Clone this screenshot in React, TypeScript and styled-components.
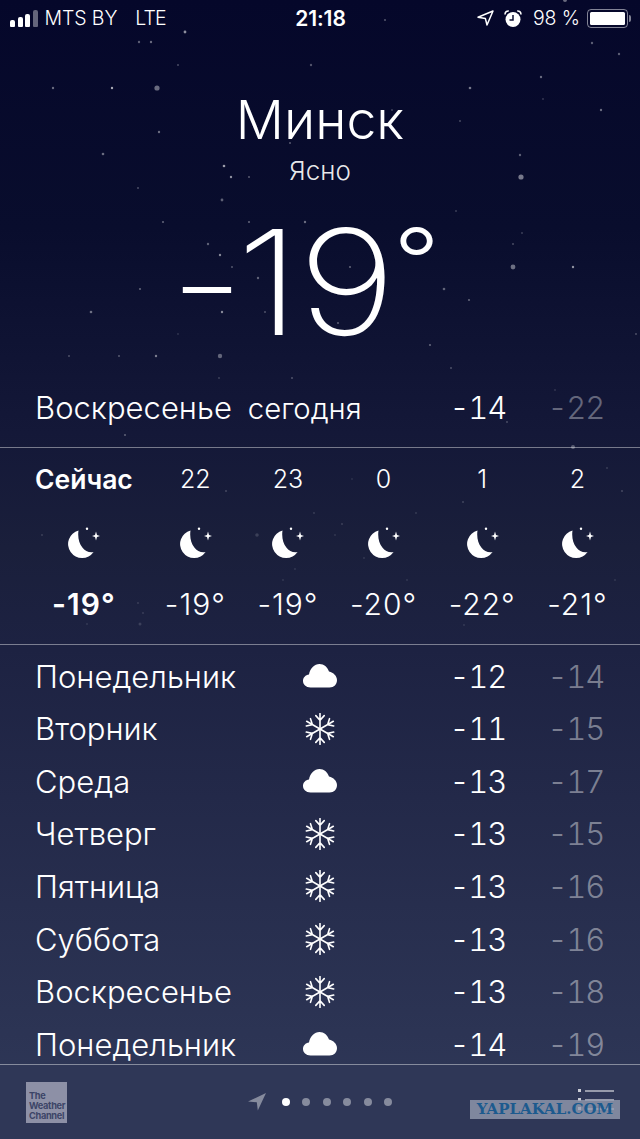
import styled, { createGlobalStyle } from "styled-components";

const GlobalStyle = createGlobalStyle`
  html, body {
    margin: 0;
    padding: 0;
    background: #05072a;
  }
  * {
    box-sizing: border-box;
  }
`;

const Screen = styled.div`
  position: relative;
  width: 640px;
  height: 1139px;
  overflow: hidden;
  color: #fff;
  font-family: Inter, "Noto Sans", sans-serif;
  background: linear-gradient(180deg, #05072a 0%, #090d2d 20%, #141838 38%, #1a1f3b 48%, #1d2242 57%, #232949 70%, #303959 100%);
`;

const Stars = styled.svg`
  position: absolute;
  inset: 0;
  pointer-events: none;
`;

const Content = styled.div`
  position: relative;
  display: flex;
  flex-direction: column;
  height: 100%;
`;

const StatusBar = styled.div`
  display: grid;
  grid-template-columns: 1fr auto 1fr;
  align-items: center;
  height: 36px;
  padding: 0 9px 0 10px;
  font-size: 19.5px;
  font-weight: 350;
  letter-spacing: -0.1px;
  color: #fff;
`;

const StatusLeft = styled.div`
  display: flex;
  align-items: center;
`;

const StatusRight = styled.div`
  display: flex;
  align-items: center;
  justify-content: flex-end;
`;

const Signal = styled.div`
  display: flex;
  align-items: flex-end;
  gap: 2.5px;
  height: 17px;
  margin-right: 7px;
`;

const SignalBar = styled.span<{ $h: number; $off?: boolean }>`
  width: 5px;
  height: ${(p) => p.$h}px;
  border-radius: 2px 2px 1px 1px;
  background: ${(p) => (p.$off ? "rgba(255,255,255,0.38)" : "#fff")};
`;

const Network = styled.span`
  margin-left: 18px;
  letter-spacing: -0.9px;
`;

const Clock = styled.div`
  font-weight: 600;
  font-size: 21px;
`;

const Percent = styled.span`
  margin: 0 7px 0 11px;
`;

const Battery = styled.div`
  display: flex;
  align-items: center;
`;

const BatteryBody = styled.div`
  width: 41px;
  height: 19px;
  padding: 2px;
  border: 1.5px solid rgba(255, 255, 255, 0.5);
  border-radius: 4px;
  &::after {
    content: "";
    display: block;
    height: 100%;
    background: #fff;
    border-radius: 1.5px;
  }
`;

const BatteryNub = styled.div`
  width: 2px;
  height: 7px;
  margin-left: 1px;
  border-radius: 0 2px 2px 0;
  background: rgba(255, 255, 255, 0.5);
`;

const Hero = styled.div`
  display: flex;
  flex-direction: column;
  align-items: center;
`;

const City = styled.h1`
  margin: 46px 0 0;
  font-size: 53.5px;
  font-weight: 350;
  line-height: 76px;
`;

const Condition = styled.div`
  margin-top: -2px;
  font-size: 26px;
  font-weight: 350;
  line-height: 30px;
  color: rgba(255, 255, 255, 0.92);
`;

const BigTemp = styled.div`
  margin: 11px 33px 11px 0;
  font-size: 146px;
  font-weight: 200;
  line-height: 170px;
  letter-spacing: -2px;
  white-space: nowrap;
  transform: scaleX(1.15);
`;

const Minus = styled.span`
  margin-right: -5px;
`;

const Degree = styled.span`
  margin-left: 0;
  font-size: 88px;
  font-weight: 300;
  line-height: 0;
  vertical-align: 43px;
`;

const Row = styled.div<{ $h?: number; $gap?: number }>`
  display: grid;
  grid-template-columns: 268px 34px 169px 98px;
  align-items: center;
  height: ${(p) => p.$h ?? 52.55}px;
  margin-bottom: ${(p) => p.$gap ?? 0}px;
  padding-left: 35px;
  font-size: 31px;
  font-weight: 350;
  flex-shrink: 0;
`;

const DayName = styled.div`
  white-space: nowrap;
`;

const Today = styled.span`
  margin-left: 16px;
  font-size: 29.3px;
`;

const Max = styled.div`
  text-align: right;
  font-feature-settings: "tnum";
  letter-spacing: -1.2px;
`;

const Min = styled(Max)<{ $dim?: number }>`
  color: rgba(255, 255, 255, ${(p) => p.$dim ?? 0.42});
`;

const Hourly = styled.div`
  display: flex;
  height: 198px;
  padding-left: 35px;
  border-top: 1px solid rgba(255, 255, 255, 0.42);
  border-bottom: 1px solid rgba(255, 255, 255, 0.42);
`;

const Hour = styled.div<{ $first?: boolean }>`
  display: flex;
  flex-direction: column;
  align-items: center;
  margin-right: ${(p) => (p.$first ? 32 : 31.5)}px;
  font-weight: ${(p) => (p.$first ? 600 : 350)};
`;

const HourLabel = styled.div<{ $first?: boolean }>`
  height: 30px;
  margin-top: 16px;
  font-size: ${(p) => (p.$first ? 26.5 : 25)}px;
  line-height: 30px;
  white-space: nowrap;
`;

const HourIcon = styled.div`
  height: 33px;
  margin-top: 33px;
`;

const HourTemp = styled.div`
  margin-top: 26px;
  font-size: 30px;
  line-height: 36px;
  letter-spacing: 1px;
  white-space: nowrap;
`;

const Daily = styled.div`
  flex: 1;
  min-height: 0;
  padding-top: 5px;
  overflow: hidden;
`;

const Footer = styled.div`
  position: relative;
  display: flex;
  align-items: center;
  justify-content: center;
  height: 75px;
  flex-shrink: 0;
  border-top: 1px solid rgba(255, 255, 255, 0.42);
  background: #2f3757;
`;

const ChannelLogo = styled.div`
  position: absolute;
  left: 26px;
  top: 17px;
  width: 41px;
  height: 41px;
  padding: 9px 0 0 3px;
  background: #8d90a6;
  color: #3c4466;
  font-size: 9.2px;
  font-weight: 700;
  line-height: 10px;
  letter-spacing: -0.3px;
`;

const Pager = styled.div`
  display: flex;
  align-items: center;
  gap: 12.5px;
`;

const Dot = styled.span<{ $on?: boolean }>`
  width: 8px;
  height: 8px;
  border-radius: 50%;
  background: ${(p) => (p.$on ? "#fff" : "rgba(255,255,255,0.42)")};
`;

const ListButton = styled.div`
  position: absolute;
  right: 26px;
  top: 24px;
  display: flex;
  flex-direction: column;
  gap: 6px;
`;

const ListLine = styled.div`
  display: flex;
  align-items: center;
  gap: 4px;
  &::before {
    content: "";
    width: 3px;
    height: 3px;
    background: rgba(255, 255, 255, 0.75);
  }
  &::after {
    content: "";
    width: 29px;
    height: 2px;
    background: rgba(255, 255, 255, 0.5);
  }
`;

const Watermark = styled.div`
  position: absolute;
  right: 20px;
  bottom: 20px;
  width: 150px;
  height: 19px;
  background: rgba(150, 158, 178, 0.78);
  color: #1c5a8e;
  font-family: "DejaVu Serif", serif;
  font-size: 15px;
  font-weight: 700;
  line-height: 19px;
  text-align: center;
  white-space: nowrap;
`;

const IconCell = styled.div`
  display: flex;
  justify-content: center;
`;

const MoonIcon = () => (
  <svg width="33" height="33" viewBox="0 0 33 33" fill="#fff">
    <path d="M11.5 3.5A14 14 0 1 0 26.6 25C18 27 9.5 17 11.5 3.5Z" />
    <circle cx="20" cy="1.8" r="1.2" />
    <path d="M29 4.6L30 8L33 9L30 10L29 13.4L28 10L25 9L28 8Z" />
  </svg>
);

const CloudIcon = () => (
  <svg width="34" height="24" viewBox="0 0 34 24" fill="#fff">
    <path d="M7.5 23.5C3 23.5 0 20.5 0 17C0 13.5 2.5 11 6 10.5C7 4.5 11.5 0 16.5 0C21 0 24.5 3 26 7.5C30.5 8.5 34 12 34 16C34 20.5 31 23.5 26.5 23.5Z" />
  </svg>
);

const SnowIcon = () => (
  <svg width="34" height="32" viewBox="-17 -16 34 32" fill="none" stroke="#fff" strokeWidth="1.6" strokeLinecap="round">
    {[0, 60, 120, 180, 240, 300].map((deg) => (
      <g key={deg} transform={`rotate(${deg})`}>
        <path d="M0 0V-15.4M-4.2 -13.4L0 -8.8L4.2 -13.4" />
      </g>
    ))}
  </svg>
);

const LocationOutline = () => (
  <svg width="17" height="16" viewBox="0 0 17 16" fill="none" stroke="#fff" strokeWidth="1.5" strokeLinejoin="round" style={{ marginRight: 10 }}>
    <path d="M1 7.2L16 1L10 15L8.4 8.6Z" />
  </svg>
);

const AlarmIcon = () => (
  <svg width="18" height="17" viewBox="0 0 18 17" style={{ display: "block" }}>
    <circle cx="9" cy="9.5" r="7.5" fill="#fff" />
    <path d="M9 5V10H5.5" fill="none" stroke="#0a0c30" strokeWidth="1.5" />
    <path d="M1 4.5C1 2 2.8 .8 4.8 1M17 4.5C17 2 15.2 .8 13.2 1" fill="none" stroke="#fff" strokeWidth="1.6" />
  </svg>
);

const LocationSolid = () => (
  <svg width="18" height="18" viewBox="0 0 18 18" fill="rgba(255,255,255,0.42)" style={{ marginRight: 3.5 }}>
    <path d="M0 8.6L18 0L9.8 17.6L8.8 9.2Z" />
  </svg>
);

const starList: [number, number, number, number][] = [
  [185, 32, 1.4, 0.55], [139, 42, 1.2, 0.35], [151, 42, 1.2, 0.4], [178, 65, 1.1, 0.25], [53, 88, 1.2, 0.4],
  [112, 88, 1.2, 0.65], [157, 88, 2.6, 0.4], [159, 132, 1.2, 0.4], [103, 154, 1.3, 0.4], [224, 166, 1.3, 0.6],
  [231, 177, 1.2, 0.55], [249, 177, 1.1, 0.3], [138, 188, 1.1, 0.25], [311, 65, 1.2, 0.3], [290, 143, 1.1, 0.3],
  [222, 200, 1.4, 0.35], [385, 20, 1.1, 0.3], [565, 0, 2, 0.4], [592, 43, 1.2, 0.35], [619, 54, 1.2, 0.35],
  [541, 77, 1.2, 0.4], [470, 88, 1.3, 0.45], [543, 99, 0.9, 0.2], [601, 110, 1.2, 0.4], [460, 121, 1, 0.25],
  [520, 155, 1.2, 0.35], [521, 177, 2.6, 0.45], [392, 110, 1.1, 0.2], [163, 222, 1.1, 0.35], [249, 222, 1.1, 0.35],
  [305, 222, 1.2, 0.4], [208, 244, 1.2, 0.35], [220, 255, 1.2, 0.5], [232, 267, 1, 0.3], [258, 278, 1.2, 0.35],
  [140, 289, 1.1, 0.35], [91, 312, 1.3, 0.4], [222, 312, 1.2, 0.5], [265, 312, 1.1, 0.25], [178, 334, 0.9, 0.15],
  [69, 356, 1, 0.25], [119, 356, 1, 0.3], [156, 356, 1.2, 0.45], [220, 356, 2.2, 0.35], [219, 378, 0.9, 0.2],
  [292, 378, 1.1, 0.25], [125, 435, 1.1, 0.3], [456, 211, 1, 0.2], [522, 233, 1, 0.2], [513, 244, 1, 0.25],
  [513, 267, 2.4, 0.4], [573, 267, 1.2, 0.55], [350, 267, 1.1, 0.35], [444, 289, 1.3, 0.35], [469, 300, 1.1, 0.35],
  [338, 323, 1.1, 0.3], [636, 334, 1, 0.25], [430, 345, 1.1, 0.35], [451, 368, 1, 0.25], [555, 390, 0.9, 0.15],
  [507, 422, 0.9, 0.25], [573, 447, 2, 0.3], [226, 491, 1, 0.2], [42, 535, 1, 0.15], [257, 535, 1.8, 0.15],
  [314, 513, 0.9, 0.15], [295, 569, 0.9, 0.12], [283, 580, 0.9, 0.12], [138, 603, 0.9, 0.15], [143, 613, 0.9, 0.14],
  [140, 624, 1.5, 0.14], [310, 592, 0.9, 0.12], [87, 624, 0.9, 0.12], [352, 479, 0.9, 0.1], [607, 468, 1, 0.15],
  [622, 491, 1, 0.2], [463, 502, 1, 0.18], [416, 513, 0.9, 0.14], [342, 524, 1.1, 0.14], [335, 535, 0.9, 0.12],
  [364, 558, 0.9, 0.12], [407, 580, 0.9, 0.12], [615, 580, 0.9, 0.12], [464, 625, 0.9, 0.12],
];

const hours = [
  { label: "Сейчас", temp: "-19°" },
  { label: "22", temp: "-19°" },
  { label: "23", temp: "-19°" },
  { label: "0", temp: "-20°" },
  { label: "1", temp: "-22°" },
  { label: "2", temp: "-21°" },
];

const days = [
  { name: "Понедельник", icon: "cloud", max: "-12", min: "-14" },
  { name: "Вторник", icon: "snow", max: "-11", min: "-15" },
  { name: "Среда", icon: "cloud", max: "-13", min: "-17" },
  { name: "Четверг", icon: "snow", max: "-13", min: "-15" },
  { name: "Пятница", icon: "snow", max: "-13", min: "-16" },
  { name: "Суббота", icon: "snow", max: "-13", min: "-16" },
  { name: "Воскресенье", icon: "snow", max: "-13", min: "-18" },
  { name: "Понедельник", icon: "cloud", max: "-14", min: "-19" },
];

export default function App() {
  return (
    <Screen>
      <GlobalStyle />
      <Stars width="640" height="1139">
        {starList.map(([x, y, r, o]) => (
          <circle key={`${x}-${y}`} cx={x} cy={y} r={r} fill="#fff" opacity={o} />
        ))}
      </Stars>
      <Content>
        <StatusBar>
          <StatusLeft>
            <Signal>
              <SignalBar $h={7} />
              <SignalBar $h={10} />
              <SignalBar $h={13} />
              <SignalBar $h={17} $off />
            </Signal>
            MTS BY
            <Network>LTE</Network>
          </StatusLeft>
          <Clock>21:18</Clock>
          <StatusRight>
            <LocationOutline />
            <AlarmIcon />
            <Percent>98 %</Percent>
            <Battery>
              <BatteryBody />
              <BatteryNub />
            </Battery>
          </StatusRight>
        </StatusBar>
        <Hero>
          <City>Минск</City>
          <Condition>Ясно</Condition>
          <BigTemp>
            <Minus>-</Minus>19<Degree>°</Degree>
          </BigTemp>
        </Hero>
        <Row $h={58} $gap={11}>
          <DayName>
            Воскресенье<Today>сегодня</Today>
          </DayName>
          <span />
          <Max>-14</Max>
          <Min $dim={0.35}>-22</Min>
        </Row>
        <Hourly>
          {hours.map((h, i) => (
            <Hour key={h.label} $first={i === 0}>
              <HourLabel $first={i === 0}>{h.label}</HourLabel>
              <HourIcon>
                <MoonIcon />
              </HourIcon>
              <HourTemp>{h.temp}</HourTemp>
            </Hour>
          ))}
        </Hourly>
        <Daily>
          {days.map((d, i) => (
            <Row key={i}>
              <DayName>{d.name}</DayName>
              <IconCell>{d.icon === "cloud" ? <CloudIcon /> : <SnowIcon />}</IconCell>
              <Max>{d.max}</Max>
              <Min>{d.min}</Min>
            </Row>
          ))}
        </Daily>
        <Footer>
          <ChannelLogo>
            The
            <br />
            Weather
            <br />
            Channel
          </ChannelLogo>
          <Pager>
            <LocationSolid />
            <Dot $on />
            <Dot />
            <Dot />
            <Dot />
            <Dot />
            <Dot />
          </Pager>
          <ListButton>
            <ListLine />
            <ListLine />
            <ListLine />
          </ListButton>
          <Watermark>YAPLAKAL.COM</Watermark>
        </Footer>
      </Content>
    </Screen>
  );
}
